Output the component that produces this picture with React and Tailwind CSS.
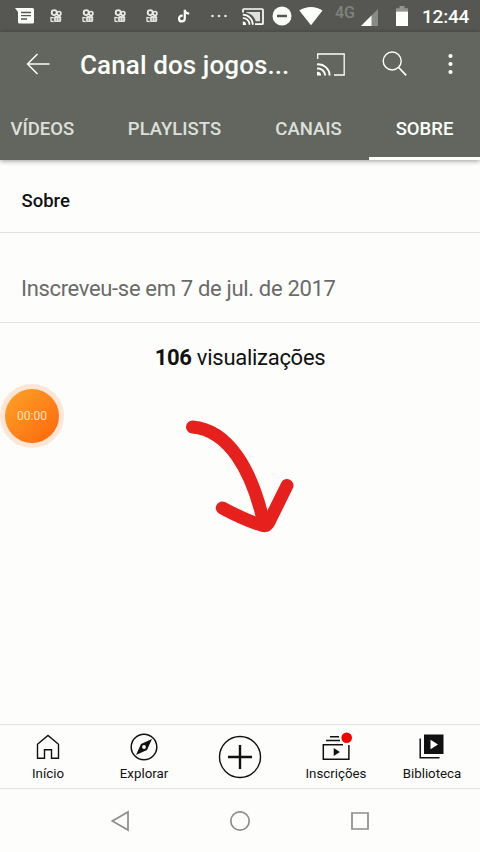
import React from 'react';

const MessageIcon = () => (
  <svg width="20" height="18" viewBox="0 0 20 18" className="shrink-0">
    <path d="M0 1h17.500q1.500 0 1.500 1.500v12.500q0 1.500-1.500 1.500H4.500Q3 16.500 3 15V5Z" fill="#fdfffa" />
    <path d="M6 5.500h10M6 8.700h10M6 12h6" stroke="#565752" strokeWidth="1.300" />
  </svg>
);

const KwaiIcon = () => (
  <svg width="12" height="14" viewBox="0 0 12 14" fill="none" stroke="#e8eae5" className="shrink-0">
    <circle cx="4.200" cy="3.600" r="2.500" strokeWidth="1.900" />
    <circle cx="9" cy="4.400" r="1.900" strokeWidth="1.700" />
    <path d="M5.500 7h4.500q1.200 0 1.200 1.200v3.300q0 1.500-1.500 1.500H5.200q-1.200 0-1.200-1.200V8.500Q4 7 5.500 7Z" fill="#dfe1dc" stroke="none" />
    <path d="M6.300 9.200v2.300M8.800 9v2.500" stroke="#8c8e89" strokeWidth=".9" />
    <path d="M3.800 8.800 1 8.400v3.800l2.800.3" strokeWidth="1.300" />
  </svg>
);

const TikTokIcon = () => (
  <svg width="12" height="14" viewBox="0 0 12 14" fill="none" stroke="#fdfffa" strokeWidth="2.200" className="shrink-0">
    <path d="M6.800.8v8.700a2.900 2.900 0 1 1-2.900-2.900h.8M6.800 1.200c.3 2 1.800 3.300 4.400 3.400" />
  </svg>
);

const CastSmallIcon = () => (
  <svg width="22" height="18" viewBox="0 0 22 18" fill="none" stroke="#fdfffa" className="shrink-0">
    <path d="M1 4.500V2q0-1 1-1h18q1 0 1 1v13.200q0 1-1 1h-7" strokeWidth="1.700" />
    <path d="M4.500 4h13.500v9.200h-4.300C12.500 9 9.500 6 4.500 4.800Z" fill="#dfe1dc" stroke="none" />
    <path d="M.8 6.700a10 10 0 0 1 10 10M.8 10a6.700 6.700 0 0 1 6.700 6.700" strokeWidth="1.700" />
    <path d="M.8 13.500A3.200 3.200 0 0 1 4 16.900H.8Z" fill="#fdfffa" stroke="none" />
  </svg>
);

const StatusBar = () => (
  <div className="flex h-8 items-center bg-[#565752] pl-[15px]">
    <MessageIcon />
    <div className="ml-[15px] flex items-center gap-5">
      <KwaiIcon />
      <KwaiIcon />
      <KwaiIcon />
      <KwaiIcon />
      <TikTokIcon />
    </div>
    <svg width="18" height="4" viewBox="0 0 18 4" fill="#e4e6e1" className="ml-5 shrink-0">
      <circle cx="2.500" cy="2" r="1.300" />
      <circle cx="9" cy="2" r="1.300" />
      <circle cx="15.500" cy="2" r="1.300" />
    </svg>
    <div className="mt-px ml-[14px]"><CastSmallIcon /></div>
    <svg width="20" height="20" viewBox="0 0 20 20" className="ml-2 shrink-0">
      <circle cx="10" cy="10" r="9.500" fill="#fdfffa" />
      <path d="M5 10h10" stroke="#565752" strokeWidth="2.500" />
    </svg>
    <svg width="24" height="20" viewBox="0 0 24 20" className="ml-[7px] shrink-0">
      <path d="M.3 4.600C7-.3 17-.3 23.500 4.600L12 19.200Z" fill="#fdfffa" />
    </svg>
    <span className="mb-1.5 ml-[12px] w-[21px] text-[16px] leading-none font-medium text-[#81837e]">4G</span>
    <svg width="17" height="17" viewBox="0 0 17 17" className="mt-0.5 ml-[5px] shrink-0">
      <path d="M17 0v17H0Z" fill="#888a85" />
      <path d="M10.500 6.500V17H0Z" fill="#fdfffa" />
    </svg>
    <svg width="12" height="20" viewBox="0 0 12 20" className="ml-[18px] shrink-0">
      <path d="M0 2.300h3.500V0h5v2.300H12V5.500H0Z" fill="#92948f" />
      <path d="M0 5.500h12V20H0Z" fill="#fdfffa" />
    </svg>
    <span className="mt-px ml-[14px] text-[19px] leading-none font-medium tracking-[-0.2px] text-[#fdfffa]">12:44</span>
  </div>
);

const TopBar = () => (
  <div className="flex h-16 items-center pl-[26px]">
    <svg width="24" height="22" viewBox="0 0 24 22" fill="none" stroke="#fdfffa" strokeWidth="1.500" className="shrink-0">
      <path d="M23.500 11H1.500M11.500 1 1.500 11l10 10" />
    </svg>
    <h1 className="mt-0.5 ml-[30px] w-[212px] text-[26px] leading-8 font-medium tracking-[0.1px] whitespace-nowrap text-[#fdfffa]">Canal dos jogos...</h1>
    <svg width="28" height="23" viewBox="0 0 28 23" fill="none" stroke="#fdfffa" className="ml-[25px] shrink-0">
      <path d="M.7 6V1h26.500v21H17" strokeWidth="1.300" />
      <path d="M0 11.400A11.200 11.200 0 0 1 12.600 22.500M0 15.600a7.200 7.200 0 0 1 8.200 6.900" strokeWidth="1.900" />
      <path d="M0 18.700a4 4 0 0 1 4.200 3.800H0Z" fill="#fdfffa" stroke="none" />
    </svg>
    <svg width="26" height="26" viewBox="0 0 26 26" fill="none" stroke="#fdfffa" strokeWidth="1.400" className="ml-[37px] shrink-0">
      <circle cx="10.200" cy="10" r="9" />
      <path d="m16.700 16.500 7.500 7.800" strokeWidth="1.700" />
    </svg>
    <svg width="6" height="22" viewBox="0 0 6 22" fill="#fdfffa" className="ml-[39px] shrink-0">
      <circle cx="3.500" cy="3" r="2.100" />
      <circle cx="3.500" cy="11" r="2.100" />
      <circle cx="3.500" cy="19" r="2.100" />
    </svg>
  </div>
);

const Tabs = () => (
  <div className="flex h-16 text-[18.500px] font-medium text-[#dde0da]">
    <div className="flex w-[101px] items-center pt-[3px] pl-[10.500px]">VÍDEOS</div>
    <div className="flex w-[147px] items-center justify-center pt-[3px]">PLAYLISTS</div>
    <div className="flex w-[121px] items-center justify-center pt-[3px]">CANAIS</div>
    <div className="flex flex-1 items-center justify-center border-b-[3px] border-[#fdfffa] pt-[6px] text-[#fdfffa]">SOBRE</div>
  </div>
);

const ArrowDoodle = () => (
  <svg width="112" height="116" viewBox="0 0 112 116" fill="none" stroke="#e5201d" strokeWidth="13" strokeLinecap="round" strokeLinejoin="round">
    <path d="M7.500 7C43 10 67 49 79 104" />
    <path d="M37.300 88c13 7 27 13.500 40 17.300 3 1 5-.3 6.700-3.300L102 65.500" />
  </svg>
);

const HomeIcon = () => (
  <svg width="24" height="25" viewBox="0 0 24 25" fill="none" stroke="#111" strokeWidth="1.400">
    <path d="M1.500 10.300 12 1.500l10.500 8.800v14h-7v-8.500h-7v8.500h-7Z" />
  </svg>
);

const ExploreIcon = () => (
  <svg width="28" height="28" viewBox="0 0 28 28">
    <circle cx="14" cy="14" r="12.800" fill="none" stroke="#111" strokeWidth="1.500" />
    <path d="M22 6 17 17 6 22 11 11Z" fill="#111" />
    <circle cx="14" cy="14" r="1.900" fill="#fdfdfd" />
  </svg>
);

const SubscriptionsIcon = () => (
  <svg width="34" height="30" viewBox="-2 0 34 30">
    <path d="M9 4.700h9M5 8.500h14" stroke="#111" strokeWidth="1.400" />
    <path d="M22 12.700H2.300v14.600h25.600V13" fill="none" stroke="#111" strokeWidth="1.500" />
    <path d="m12.700 16 6.200 4-6.200 4Z" fill="#111" />
    <circle cx="25.700" cy="5.700" r="5.300" fill="#f40000" />
  </svg>
);

const LibraryIcon = () => (
  <svg width="26" height="25" viewBox="0 0 26 25">
    <path d="M5 .5h19.500v19.500H5Z" fill="#111" />
    <path d="m11.500 5.800 7.500 4.700-7.500 4.700Z" fill="#fdfdfd" />
    <path d="M1.200 4.500v19.300h19.300" fill="none" stroke="#111" strokeWidth="1.500" />
  </svg>
);

const navItems = [
  { label: 'Início', icon: <HomeIcon /> },
  { label: 'Explorar', icon: <ExploreIcon /> },
  { label: '', icon: null },
  { label: 'Inscrições', icon: <SubscriptionsIcon /> },
  { label: 'Biblioteca', icon: <LibraryIcon /> },
];

const BottomNav = () => (
  <div className="grid h-[65px] grid-cols-5 border-y border-[#dfe3e2]">
    {navItems.map((item, idx) => (
      item.label ? (
        <div key={idx} className="flex flex-col items-center">
          <div className="mt-1.5 flex h-[31px] items-center justify-center">{item.icon}</div>
          <span className="mt-1 text-[13.300px] leading-4 text-[#111]">{item.label}</span>
        </div>
      ) : (
        <div key={idx} className="flex items-center justify-center">
          <svg width="44" height="44" viewBox="0 0 44 44" fill="none" stroke="#111">
            <circle cx="22" cy="22" r="20.500" strokeWidth="1.400" />
            <path d="M22 10v24M10 22h24" strokeWidth="2.400" />
          </svg>
        </div>
      )
    ))}
  </div>
);

const SystemNav = () => (
  <div className="flex h-[63px] items-center justify-between px-[110px] pt-px">
    <svg width="20" height="22" viewBox="0 0 20 22" fill="none" stroke="#8c8e8b" strokeWidth="1.700">
      <path d="M18 2v18L2.300 11Z" />
    </svg>
    <svg width="22" height="22" viewBox="0 0 22 22" fill="none" stroke="#8c8e8b" strokeWidth="1.700">
      <circle cx="11" cy="11" r="9.200" />
    </svg>
    <svg width="20" height="20" viewBox="0 0 20 20" fill="none" stroke="#8c8e8b" strokeWidth="1.700">
      <path d="M2 2h16v16H2Z" />
    </svg>
  </div>
);

const App = () => {
  return (
    <div className="relative flex h-[852px] w-[480px] flex-col overflow-hidden bg-[#fdfefc] font-['Roboto',sans-serif]">
      <StatusBar />
      <div className="bg-[#62665f] shadow-[0_1px_5px_rgba(0,0,0,0.4)]">
        <TopBar />
        <Tabs />
      </div>

      {/* About section */}
      <div className="flex h-[73px] items-center border-b border-[#dfe3e2] px-[21.500px] pt-2.5">
        <h2 className="mt-0.5 text-[18.500px] font-medium text-[#111]">Sobre</h2>
      </div>
      <div className="flex h-[90px] items-end border-b border-[#dfe3e2] px-[21px] pb-[17px]">
        <p className="text-[22px] leading-8 tracking-[-0.330px] text-[#696b69]">Inscreveu-se em 7 de jul. de 2017</p>
      </div>
      <p className="mt-[19px] text-center text-[22px] leading-8 tracking-[-0.280px] text-[#111]">
        <span className="font-bold">106</span> visualizações
      </p>

      <div className="flex-1" />
      <BottomNav />
      <SystemNav />

      {/* Floating recorder bubble */}
      <div className="absolute top-[384px] left-0 flex size-16 items-center justify-center rounded-full bg-[#fde5d8]">
        <div className="flex size-[54px] items-center justify-center rounded-full bg-linear-to-br from-[#fda326] to-[#fb6408] text-[12px] text-[#fee0bd]">
          00:00
        </div>
      </div>

      <div className="absolute top-[420px] left-[185px]">
        <ArrowDoodle />
      </div>
    </div>
  );
};

export default App;
